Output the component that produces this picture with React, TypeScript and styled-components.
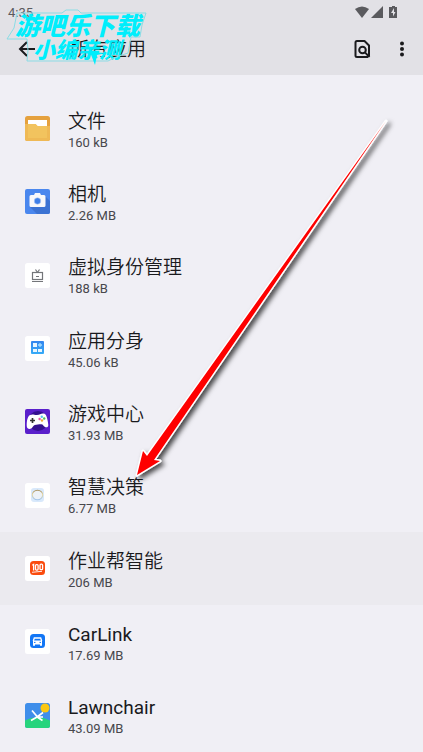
import React from "react";
import styled, { createGlobalStyle } from "styled-components";
import type { ReactNode } from "react";

const Global = createGlobalStyle`
  * { box-sizing: border-box; }
  body {
    margin: 0;
    background: #f0eff5;
    color: #1a1a1d;
    font-family: Roboto, "Noto Sans CJK SC", sans-serif;
    overflow: hidden;
  }
`;

const Page = styled.main`
  position: relative;
  min-height: 100vh;
`;

const Header = styled.header`
  background: #e2e1e6;
`;

const StatusBar = styled.div`
  display: flex;
  align-items: center;
  justify-content: space-between;
  height: 24px;
  padding: 0 25px 0 8px;
  color: #5a5a5e;
  font-size: 13px;
`;

const StatusIcons = styled.div`
  display: flex;
  align-items: center;
`;

const Toolbar = styled.div`
  display: flex;
  align-items: center;
  height: 51px;
  padding: 0 9px 2px 16px;
`;

const IconButton = styled.button`
  display: grid;
  place-items: center;
  width: 24px;
  height: 32px;
  margin: 0;
  padding: 0;
  border: 0;
  background: none;
  color: #1a1a1d;
`;

const Title = styled.h1`
  flex: 1;
  margin: 0 0 0 30px;
  padding-top: 2px;
  font-size: 19px;
  line-height: 28px;
  font-weight: 350;
`;

const Actions = styled.div`
  display: flex;
  gap: 16px;
`;

const AppList = styled.ul`
  display: grid;
  grid-auto-rows: 1fr;
  min-height: 660px;
  margin: 0;
  padding: 0;
  padding-top: 17px;
  box-sizing: content-box;
  list-style: none;
`;

const AppRow = styled.li<{ $active?: boolean }>`
  display: flex;
  align-items: center;
  gap: 18px;
  padding: 0 25px;
  background: ${(p) => (p.$active ? "#ebeaef" : "transparent")};
`;

const AppIcon = styled.svg`
  flex: none;
  width: 25px;
  height: 25px;
`;

const AppText = styled.div`
  display: flex;
  flex-direction: column;
  padding-top: 4px;
`;

const AppName = styled.span<{ $latin: boolean }>`
  font-size: 19px;
  line-height: 24px;
  font-weight: ${(p) => (p.$latin ? 400 : 350)};
`;

const AppSize = styled.span`
  color: #47474c;
  font-size: 13px;
  line-height: 18px;
`;

const Watermark = styled.div`
  position: absolute;
  top: 8px;
  left: 6px;
  width: 141px;
  height: 57px;
  color: #00eefc;
  font-family: "Noto Sans CJK SC", sans-serif;
  font-style: italic;
  font-weight: 900;
  white-space: nowrap;
`;

const WatermarkOutline = styled.svg`
  position: absolute;
  inset: 0;
`;

const WatermarkLine = styled.div<{ $small?: boolean }>`
  padding-left: ${(p) => (p.$small ? 27 : 9)}px;
  padding-top: ${(p) => (p.$small ? 0 : 4)}px;
  font-size: ${(p) => (p.$small ? 22 : 25)}px;
  line-height: ${(p) => (p.$small ? 22 : 25)}px;
`;

const Pointer = styled.svg`
  position: absolute;
  top: 110px;
  left: 125px;
  pointer-events: none;
`;

const WhiteTile = () => <rect width="25" height="25" rx="2.5" fill="#fff" />;

type App = { name: string; size: string; active?: boolean; icon: ReactNode };

const apps: App[] = [
  {
    name: "文件",
    size: "160 kB",
    icon: (
      <>
        <rect width="25" height="25" rx="2.5" fill="#e5a13e" />
        <path d="M3 4h19v9H3z" fill="#fff" />
        <path d="M0 8h10.500l2 2H25v12.500a2.500 2.500 0 0 1-2.500 2.500h-20A2.500 2.500 0 0 1 0 22.500z" fill="#efb955" />
        <path d="M3 8h7.500l2 2H22v12H3z" fill="#f2c35e" />
      </>
    ),
  },
  {
    name: "相机",
    size: "2.26 MB",
    icon: (
      <>
        <rect width="25" height="25" rx="2" fill="#4a87ee" />
        <path d="M20 7l5 5v11a2 2 0 0 1-2 2H12l-7-7z" fill="#3c73d3" />
        <path d="M6 6h3l1-2h5l1 2h3a1.500 1.500 0 0 1 1.500 1.500v9A1.500 1.500 0 0 1 19 18H6a1.500 1.500 0 0 1-1.500-1.500v-9A1.500 1.500 0 0 1 6 6z" fill="#f8f8fa" />
        <circle cx="12.500" cy="12" r="3.300" fill="#3f7fe8" stroke="#c5d6f5" strokeWidth=".6" />
      </>
    ),
  },
  {
    name: "虚拟身份管理",
    size: "188 kB",
    icon: (
      <>
        <WhiteTile />
        <g fill="none" stroke="#737579" strokeWidth="1.200">
          <rect x="7.500" y="9.500" width="10" height="7" />
          <path d="M10.500 6.500l2 3M14.500 6.500l-2 3M11 13.500h3M7 18.500h11" />
        </g>
      </>
    ),
  },
  {
    name: "应用分身",
    size: "45.06 kB",
    icon: (
      <>
        <defs>
          <linearGradient id="clone" x1="0" y1="0" x2="0" y2="1">
            <stop offset="0" stopColor="#3485ee" />
            <stop offset="1" stopColor="#36abf7" />
          </linearGradient>
        </defs>
        <WhiteTile />
        <rect x="6" y="5" width="13" height="13" rx="1" fill="url(#clone)" />
        <path d="M8 7h4v4H8zM8 13h4v3H8zM13 13h4v3h-4z" fill="#e9f6ff" />
        <path d="M15 7v4M13 9h4" stroke="#a4dcff" strokeWidth="1.300" />
      </>
    ),
  },
  {
    name: "游戏中心",
    size: "31.93 MB",
    icon: (
      <>
        <rect width="25" height="25" rx="2" fill="#5a1fcb" />
        <circle cx="13" cy="12" r="10" fill="#34108e" />
        <path d="M5 6c3-1.500 4 .2 7 0s4-2 7-1.500c3 .5 4 8 4.300 11.500.2 3-3.500 3-5 .5-1-1.500-3-1.200-5.500-.9s-4 .4-5 2.200C6 21 2 20.500 1.800 17.500 1.500 14 2 7.500 5 6z" fill="#fff" />
        <path d="M7.500 9v5M5 11.500h5" stroke="#333" strokeWidth="1.700" />
        <circle cx="16.800" cy="7.800" r="1.200" fill="#53c8ef" />
        <circle cx="19.200" cy="9.500" r="1.200" fill="#52c45a" />
        <circle cx="14.600" cy="10" r="1.200" fill="#ed53a7" />
        <circle cx="17" cy="11.500" r="1.200" fill="#efaa34" />
      </>
    ),
  },
  {
    name: "智慧决策",
    size: "6.77 MB",
    icon: (
      <>
        <defs>
          <linearGradient id="ring" x1="0" y1="0" x2="0" y2="1">
            <stop offset="0" stopColor="#a6905d" />
            <stop offset=".45" stopColor="#e8d9a7" />
            <stop offset="1" stopColor="#9fc5ee" />
          </linearGradient>
        </defs>
        <WhiteTile />
        <rect x="6" y="5" width="13" height="14" rx="3" fill="#d9e9fb" />
        <ellipse cx="12.500" cy="12" rx="5.200" ry="4.800" fill="#edf2f7" stroke="url(#ring)" strokeWidth="1.100" />
      </>
    ),
  },
  {
    name: "作业帮智能",
    size: "206 MB",
    active: true,
    icon: (
      <>
        <WhiteTile />
        <rect x="5" y="5" width="15" height="14" rx="3.500" fill="#fa4b0d" />
        <g fill="none" stroke="#fff" strokeWidth="1.300">
          <path d="M7.300 9.200l1.300-.8v6" />
          <rect x="10.500" y="8.600" width="2.600" height="5.500" rx="1" />
          <rect x="15" y="8.200" width="2.600" height="5.500" rx="1" />
          <path d="M7 16.300l10-1" strokeWidth=".9" />
        </g>
      </>
    ),
  },
  {
    name: "CarLink",
    size: "17.69 MB",
    icon: (
      <>
        <WhiteTile />
        <rect x="5" y="5" width="15" height="14" rx="3.500" fill="#1276f5" />
        <path d="M8.300 12l1-3h6.400l1 3" fill="none" stroke="#fff" strokeWidth="1.300" />
        <path d="M8 11.500h9v4H8zM8 15h2v1.800H8zM15 15h2v1.800h-2z" fill="#fff" />
        <path d="M9 13.400h1.500M14.500 13.400H16" stroke="#1276f5" strokeWidth="1" />
      </>
    ),
  },
  {
    name: "Lawnchair",
    size: "43.09 MB",
    icon: (
      <>
        <rect width="25" height="25" rx="2.500" fill="#3f8eea" />
        <path d="M0 17.500Q12 11 25 17.500v5a2.500 2.500 0 0 1-2.500 2.500h-20A2.500 2.500 0 0 1 0 22.500z" fill="#27d47d" />
        <circle cx="20" cy="5" r="4.500" fill="#fbc712" />
        <path d="M7 7.500L13 14.500L17.500 17.500M6 17.500L12 14L18 9.500M12.500 14H18" fill="none" stroke="#fff" strokeWidth="1.700" />
      </>
    ),
  },
];

export default function App() {
  return (
    <Page>
      <Global />
      <Header>
        <StatusBar>
          <span>4:35</span>
          <StatusIcons>
            <svg width="43" height="14" viewBox="0 0 43 14" fill="currentColor" aria-label="Wi-Fi, signal, battery">
              <path d="M0 4Q7-1 14 4L7 13z" />
              <path d="M28 1v12H16z" />
              <path d="M37 1h3v1h2v11h-8V2h3z" />
              <path d="M39 3L36 8h2v3.500L40.500 7H39z" fill="#e2e1e6" />
            </svg>
          </StatusIcons>
        </StatusBar>
        <Toolbar>
          <IconButton aria-label="返回">
            <svg width="20" height="18" viewBox="0 0 20 18" fill="none" stroke="currentColor" strokeWidth="2">
              <path d="M9 2L2 9l7 7M2 9h15" />
            </svg>
          </IconButton>
          <Title>所有应用</Title>
          <Actions>
            <IconButton aria-label="搜索">
              <svg width="18" height="20" viewBox="0 0 18 20" fill="none" stroke="currentColor" strokeWidth="2">
                <path d="M16 17V6.500L11.500 2H4Q2.500 2 2.500 3.500v13Q2.500 18 4 18H15" strokeLinejoin="round" />
                <circle cx="9.500" cy="11" r="3.300" />
                <path d="M11.900 13.400L16.500 18" />
              </svg>
            </IconButton>
            <IconButton aria-label="更多选项">
              <svg width="6" height="18" viewBox="0 0 6 18" fill="currentColor">
                <circle cx="3" cy="3.500" r="2" />
                <circle cx="3" cy="9" r="2" />
                <circle cx="3" cy="14.500" r="2" />
              </svg>
            </IconButton>
          </Actions>
        </Toolbar>
      </Header>

      <AppList>
        {apps.map((app) => (
          <AppRow key={app.name} $active={app.active}>
            <AppIcon viewBox="0 0 25 25" aria-hidden="true">
              {app.icon}
            </AppIcon>
            <AppText>
              <AppName $latin={/^[A-Za-z]/.test(app.name)}>{app.name}</AppName>
              <AppSize>{app.size}</AppSize>
            </AppText>
          </AppRow>
        ))}
      </AppList>

      <Watermark>
        <WatermarkOutline width="141" height="57" viewBox="0 0 141 57" fill="none" stroke="#8bdce5" strokeWidth="1">
          <path d="M11 5h45l4-3h12l3 3h65l-4 12-2 12h-9l-3 16-12 4-8 4H21l1-11-1-11H1l7-11z" />
          <path d="M84 44l5 13 2-10 9-2" fill="#00eefc" stroke="none" />
        </WatermarkOutline>
        <WatermarkLine>游吧乐下载</WatermarkLine>
        <WatermarkLine $small>小编亲测</WatermarkLine>
      </Watermark>

      <Pointer width="280" height="380" viewBox="0 0 280 380" aria-hidden="true">
        <defs>
          <filter id="shade" x="-10%" y="-10%" width="120%" height="120%">
            <feDropShadow dx="3" dy="3" stdDeviation="2.500" floodColor="#000" floodOpacity=".7" />
          </filter>
        </defs>
        <path
          d="M261 11L22 346L18 341L12 365L35 351L29 350Z"
          fill="#fe0000"
          stroke="#fff"
          strokeWidth="3"
          strokeLinejoin="round"
          paintOrder="stroke"
          filter="url(#shade)"
        />
      </Pointer>
    </Page>
  );
}
